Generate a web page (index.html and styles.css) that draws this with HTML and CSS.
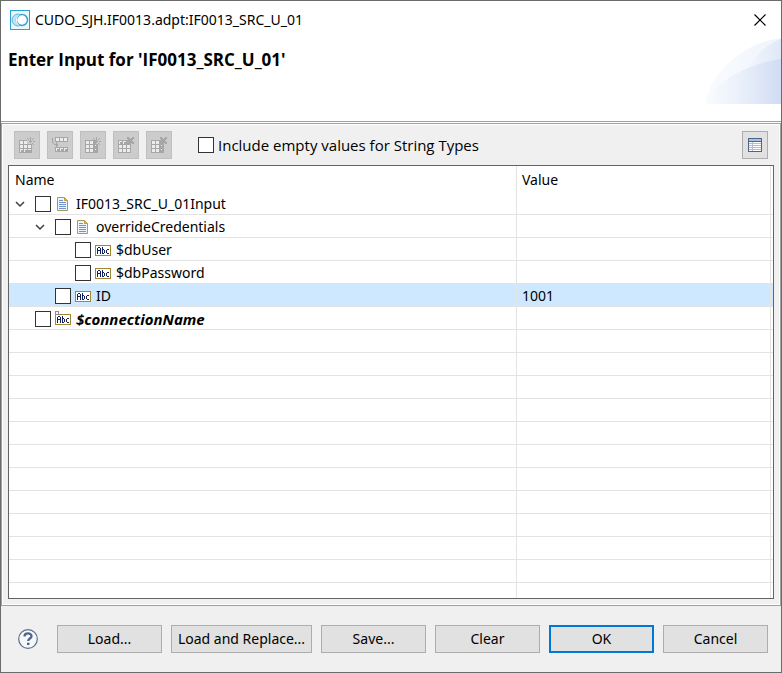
FILE: index.html
```html
<!DOCTYPE html>
<html lang="en">
<head>
<meta charset="utf-8">
<title>CUDO_SJH.IF0013.adpt:IF0013_SRC_U_01</title>
<link rel="stylesheet" href="styles.css">
</head>
<body>
<svg class="defs" aria-hidden="true">
  <defs>
    <symbol id="abc" viewBox="0 0 16 16">
      <rect x="0.5" y="3.5" width="15" height="10" fill="#fff" stroke="#a68532"/>
      <g fill="#10205e" shape-rendering="crispEdges">
        <path d="M3 5h2v1H3zM2 6h1v6H2zM5 6h1v6H5zM3 8h2v1H3z"/>
        <path d="M7 5h1v7H7zM8 7h1v1H8zM9 8h1v3H9zM8 11h1v1H8z"/>
        <path d="M12 7h2v1h-2zM11 8h1v3h-1zM12 11h2v1h-2z"/>
      </g>
    </symbol>
    <symbol id="doc" viewBox="0 0 16 16">
      <path d="M2.500 1.500h7l3 3v10h-10z" fill="#eef4fc" stroke="#a59a62"/>
      <path d="M9.500 1.500v3h3z" fill="#e6c05c" stroke="#c09a3e"/>
      <path d="M4 4.500h4M4 6.500h7M4 8.500h7M4 10.500h7M4 12.500h7" stroke="#6f96cc"/>
    </symbol>
    <symbol id="chevron" viewBox="0 0 10 16">
      <path d="M1 6l4 4 4-4" fill="none" stroke="#404040" stroke-width="1.500"/>
    </symbol>
    <symbol id="grid" viewBox="0 0 16 16">
      <path d="M0 3h13v13H0z" fill="#a6a6a6"/>
      <path d="M1 4h3v3H1zM5 4h3v3H5zM1 8h3v3H1zM5 8h3v3H5zM1 12h3v3H1zM5 12h3v3H5z" fill="#ececec"/>
    </symbol>
    <symbol id="spark" viewBox="0 0 16 16">
      <path d="M8 0h6v7H8z" fill="#ccc"/>
      <path d="M11 0h1v3h-1zM8 1h1v1H8zM9 2h1v1H9zM14 1h1v1h-1zM13 2h1v1h-1zM10 4h3v1h-3zM11 3h1v3h-1zM14 4h2v1h-2zM13 6h1v1h-1zM14 7h1v1h-1zM11 7h1v1h-1z" fill="#a6a6a6"/>
    </symbol>
    <symbol id="cross" viewBox="0 0 16 16">
      <path d="M9 0h2v1h1v1h1V1h1V0h2v2h-1v1h-1v1h1v1h1v2h-2V6h-1V5h-1v1h-1v1H9V5h1V4h1V3h-1V2H9z" fill="#a6a6a6"/>
    </symbol>
  </defs>
</svg>
<main class="dialog">
  <header class="titlebar">
    <svg class="app-icon" viewBox="0 0 20 20" aria-hidden="true">
      <rect x="0.500" y="0.500" width="19" height="19" fill="#eef8fc" stroke="#2a9fd2"/>
      <circle cx="8" cy="10" r="6" fill="#bfe3f2" stroke="#5cb6db"/>
      <circle cx="12" cy="10" r="5.500" fill="#fff" stroke="#3aa5d2" stroke-width="1.500"/>
      <path d="M9 4.500a7 7 0 0 0 0 11" fill="none" stroke="#fff"/>
    </svg>
    <span class="title">CUDO_SJH.IF0013.adpt:IF0013_SRC_U_01</span>
    <button class="close" type="button" aria-label="Close">
      <svg viewBox="0 0 12 12" width="12" height="12"><path d="M0.500 0.500l11 11M11.500 0.500l-11 11" stroke="#000" stroke-width="1.200"/></svg>
    </button>
  </header>
  <section class="banner">
    <h1>Enter Input for 'IF0013_SRC_U_01'</h1>
    <svg class="wave" viewBox="0 0 75 66" aria-hidden="true">
      <defs>
        <linearGradient id="g1"><stop offset="0" stop-color="#f9fbfe"/><stop offset="1" stop-color="#f0f5fc"/></linearGradient>
        <linearGradient id="g2"><stop offset="0" stop-color="#f9fbfe"/><stop offset=".5" stop-color="#e9effa"/><stop offset="1" stop-color="#d0dcf3"/></linearGradient>
        <linearGradient id="g3"><stop offset="0" stop-color="#f2f6fc"/><stop offset="1" stop-color="#dfe8f7"/></linearGradient>
      </defs>
      <path d="M0 66C0 40 36 4 75 0v66z" fill="url(#g1)"/>
      <path d="M42 32Q54 8 75 1v26z" fill="url(#g3)"/>
      <path d="M0 66C2 50 36 26 75 21v45z" fill="url(#g2)"/>
    </svg>
  </section>
  <section class="group">
    <div class="toolbar">
      <button class="tool" type="button" disabled aria-label="Add row">
        <svg viewBox="0 0 16 16"><use href="#grid"/><path d="M9 4h3v3H9zM9 8h3v3H9zM9 12h3v1H9z" fill="#ececec"/><path d="M2 13h2v2H2zM6 13h2v2H6zM9 13h3v2H9z" fill="#a6a6a6"/><use href="#spark"/></svg>
      </button>
      <button class="tool" type="button" disabled aria-label="Insert row">
        <svg viewBox="0 0 16 16"><path d="M3 0h13v5H3zM3 10h13v5H3zM0 1h1v5H0zM1 6h1v1H1zM2 7h2V5h1v2h1v2H5v1H4V8H2z" fill="#a6a6a6"/><path d="M4 1h3v3H4zM8 1h3v3H8zM12 1h3v3h-3zM4 11h3v1H5v2H4zM8 11h3v1H9v2H8zM12 11h3v1h-2v2h-1z" fill="#ececec"/></svg>
      </button>
      <button class="tool" type="button" disabled aria-label="Add column">
        <svg viewBox="0 0 16 16"><use href="#grid"/><use href="#spark"/><path d="M8 3h3v4H8z" fill="#a6a6a6"/><path d="M10 8h1v1h-1zM10 12h1v1h-1z" fill="#ececec"/></svg>
      </button>
      <button class="tool" type="button" disabled aria-label="Delete row">
        <svg viewBox="0 0 16 16"><use href="#grid"/><path d="M9 8h3v3H9zM9 12h3v3H9z" fill="#ececec"/><path d="M2 5h2v2H2zM6 5h2v2H6z" fill="#a6a6a6"/><use href="#cross"/></svg>
      </button>
      <button class="tool" type="button" disabled aria-label="Delete column">
        <svg viewBox="0 0 16 16"><use href="#grid"/><path d="M10 8h1v1h-1zM10 12h1v1h-1z" fill="#ececec"/><use href="#cross"/></svg>
      </button>
      <label class="include"><input type="checkbox">Include empty values for String Types</label>
      <button class="tool view" type="button" aria-label="Show table">
        <svg viewBox="0 0 16 16"><path d="M1.500 1.500h13v13h-13z" fill="#fff" stroke="#4a6390"/><path d="M2 2h12v2H2z" fill="#a9c3d6"/><path d="M2 4.500h12" stroke="#4a6390"/><path d="M2 6.500h12M2 8.500h12M2 10.500h12M2 12.500h12M5.500 5v9" stroke="#b4bdca"/></svg>
      </button>
    </div>
    <div class="viewer">
      <table>
        <colgroup><col class="c-name"><col class="c-value"><col class="c-rest"></colgroup>
        <thead><tr><th>Name</th><th>Value</th><th></th></tr></thead>
        <tbody>
          <tr><td><div class="node"><svg class="twisty"><use href="#chevron"/></svg><input type="checkbox" id="n1"><svg class="ico"><use href="#doc"/></svg><label for="n1">IF0013_SRC_U_01Input</label></div></td><td></td><td></td></tr>
          <tr><td><div class="node l1"><svg class="twisty"><use href="#chevron"/></svg><input type="checkbox" id="n2"><svg class="ico"><use href="#doc"/></svg><label for="n2">overrideCredentials</label></div></td><td></td><td></td></tr>
          <tr><td><div class="node l2"><span class="twisty"></span><input type="checkbox" id="n3"><svg class="ico"><use href="#abc"/></svg><label for="n3">$dbUser</label></div></td><td></td><td></td></tr>
          <tr><td><div class="node l2"><span class="twisty"></span><input type="checkbox" id="n4"><svg class="ico"><use href="#abc"/></svg><label for="n4">$dbPassword</label></div></td><td></td><td></td></tr>
          <tr class="selected"><td><div class="node l1"><span class="twisty"></span><input type="checkbox" id="n5"><svg class="ico"><use href="#abc"/></svg><label for="n5">ID</label></div></td><td>1001</td><td></td></tr>
          <tr><td><div class="node"><span class="twisty"></span><input type="checkbox" id="n6"><svg class="ico"><use href="#abc"/><rect x="0.500" y="0.500" width="3" height="3" fill="#fff" stroke="#8c8c96"/></svg><label for="n6" class="attr">$connectionName</label></div></td><td></td><td></td></tr>
          <tr><td></td><td></td><td></td></tr>
          <tr><td></td><td></td><td></td></tr>
          <tr><td></td><td></td><td></td></tr>
          <tr><td></td><td></td><td></td></tr>
          <tr><td></td><td></td><td></td></tr>
          <tr><td></td><td></td><td></td></tr>
          <tr><td></td><td></td><td></td></tr>
          <tr><td></td><td></td><td></td></tr>
          <tr><td></td><td></td><td></td></tr>
          <tr><td></td><td></td><td></td></tr>
          <tr><td></td><td></td><td></td></tr>
          <tr class="last"><td></td><td></td><td></td></tr>
        </tbody>
      </table>
    </div>
  </section>
  <footer class="actions">
    <button class="help" type="button" aria-label="Help">
      <svg viewBox="0 0 20 20" width="20" height="20"><circle cx="10" cy="10" r="9.300" fill="#f6f8fb" stroke="#5c6f8e" stroke-width="1.200"/><path d="M6.500 7.500C6.500 3.500 13.500 3.500 13.500 7.200C13.500 9.500 10.200 9.500 10.200 12" fill="none" stroke="#4f6488" stroke-width="2.300"/><path d="M9 13.700h2.500v2.300H9z" fill="#4f6488"/></svg>
    </button>
    <button class="btn" type="button">Load...</button>
    <button class="btn wide" type="button">Load and Replace...</button>
    <button class="btn" type="button">Save...</button>
    <button class="btn" type="button">Clear</button>
    <button class="btn default" type="button">OK</button>
    <button class="btn" type="button">Cancel</button>
  </footer>
</main>
</body>
</html>
```
FILE: styles.css
```css
* { box-sizing: border-box; }
body {
  margin: 0;
  font: 14px/20px "Noto Sans", "Open Sans", sans-serif;
  color: #000;
}
button, input { font: inherit; color: inherit; margin: 0; }
svg { display: block; flex: none; }
.defs { position: absolute; width: 0; height: 0; }

.dialog {
  display: flex;
  flex-direction: column;
  min-height: 100vh;
  border: 1px solid #6b6b6b;
  background: #f0f0f0;
}

.titlebar {
  display: flex;
  align-items: center;
  height: 37px;
  padding: 0 15px 0 9px;
  background: #fff;
}
.app-icon { width: 20px; height: 20px; }
.title { margin-left: 5px; }
.close { margin-left: auto; padding: 0; border: 0; background: none; }

.banner {
  display: flex;
  justify-content: space-between;
  height: 84px;
  padding-left: 7px;
  border-bottom: 1px solid #a0a0a0;
  background: #fff;
}
h1 { margin: 12px 0 0; font: 700 17px/20px "Open Sans", sans-serif; }
.wave { width: 75px; height: 66px; }

.group {
  display: flex;
  flex-direction: column;
  flex: 1;
  margin-top: 1px;
  padding: 5px 5px 6px;
  border: 1px solid #a0a0a0;
  box-shadow: inset 0 0 0 1px #fff, 0 -1px #fff;
}
.toolbar {
  display: flex;
  gap: 7px;
  margin-bottom: 6px;
  padding: 2px 7px 0;
}
.tool {
  display: flex;
  align-items: center;
  justify-content: center;
  width: 26px;
  height: 28px;
  padding: 0;
  border: 1px solid #bfbfbf;
  background: #ccc;
}
.tool svg { width: 16px; height: 16px; shape-rendering: crispEdges; }
.view { margin-left: auto; border-color: #adadad; background: #e1e1e1; }
.include {
  display: flex;
  align-items: center;
  gap: 4px;
  margin-left: 19px;
  font: 15px/20px "Open Sans", sans-serif;
}
input[type="checkbox"] {
  appearance: none;
  flex: none;
  width: 16px;
  height: 16px;
  border: 1px solid #333;
  background: #fff;
}

.viewer {
  flex: 1;
  margin: 0 1px;
  overflow: hidden;
  border: 1px solid #646464;
  background: #fff;
}
table {
  width: 100%;
  table-layout: fixed;
  border-collapse: separate;
  border-spacing: 0;
}
.c-value { width: 254px; }
.c-rest { width: 2px; }
th, td { padding: 2px 5px 0; text-align: left; border-right: 1px solid #e3e3e3; }
th:first-child, td:first-child { padding-left: 6px; }
th:last-child, td:last-child { padding: 0; border-right: 0; }
th { height: 26px; font-weight: 400; }
td { height: 23px; border-bottom: 1px solid #e3e3e3; }
.last td { height: 15px; border-bottom: 0; }
.selected td { background: #cde8ff; }
.node { display: flex; align-items: center; height: 20px; }
.l1 { padding-left: 20px; }
.l2 { padding-left: 40px; }
.twisty { flex: none; width: 10px; height: 16px; margin-right: 10px; }
.ico { width: 16px; height: 16px; margin: 0 5px 0 4px; }
.attr { font-size: 15px; font-weight: 700; font-style: italic; }

.actions {
  display: flex;
  align-items: center;
  gap: 9px;
  padding: 19px 13px 19px 17px;
}
.help { margin-right: 10px; padding: 0; border: 0; background: none; }
.btn {
  flex: 1 1 105px;
  height: 28px;
  padding: 0;
  border: 1px solid #adadad;
  background: #e1e1e1;
  white-space: nowrap;
}
.wide { flex-basis: 141px; }
.default { border: 2px solid #0078d7; }
```
